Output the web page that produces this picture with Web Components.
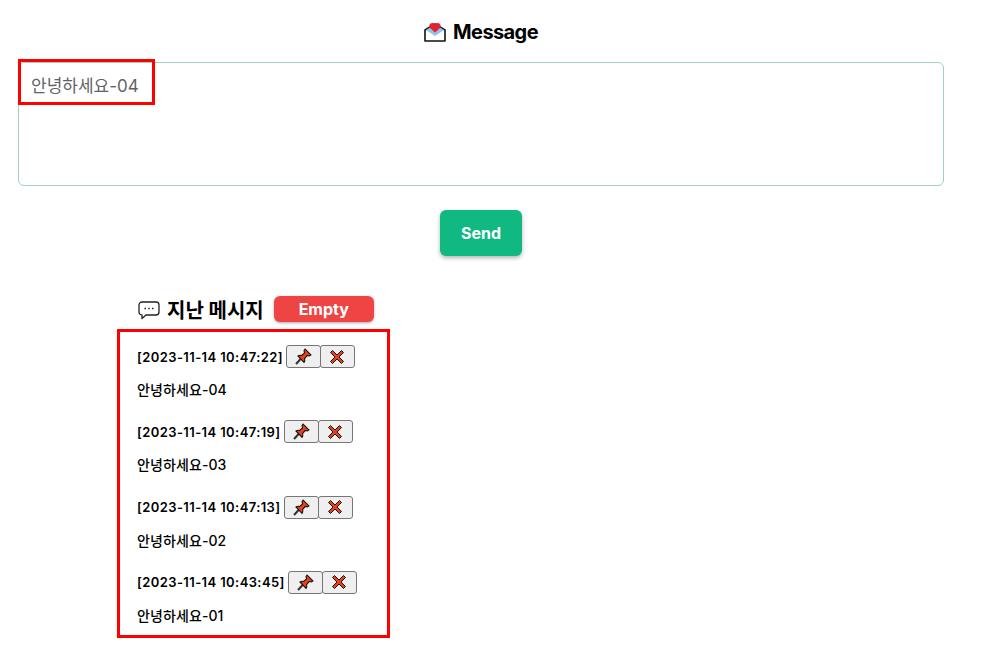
<!DOCTYPE html>
<html lang="ko">
<head>
<meta charset="utf-8">
<title>Message</title>
<style>
  html,body{margin:0;padding:0;background:#fff;}
  body{font-family:Inter,"Noto Sans CJK KR",sans-serif;color:#000;width:962px;}
</style>
</head>
<body>
<message-app>
  <message-form></message-form>
  <message-history>
    <message-item time="2023-11-14 10:47:22">안녕하세요-04</message-item>
    <message-item time="2023-11-14 10:47:19">안녕하세요-03</message-item>
    <message-item time="2023-11-14 10:47:13">안녕하세요-02</message-item>
    <message-item time="2023-11-14 10:43:45">안녕하세요-01</message-item>
  </message-history>
</message-app>
<script>
class MessageApp extends HTMLElement{
    constructor(){
        super();
        this.attachShadow({mode:'open'});
        this.shadowRoot.innerHTML = `
        <style>
            :host{display:block;}
        </style>
        <slot></slot>
        `;
    }
}
class MessageForm extends HTMLElement{
    constructor(){
        super();
        this.attachShadow({mode:'open'});
        this.shadowRoot.innerHTML = `
        <style>
            :host{display:flex;flex-direction:column;align-items:center;padding-top:19px;}
            h1{display:flex;align-items:center;gap:7px;margin:0;height:25px;font-size:20px;font-weight:700;letter-spacing:-.6px;}
            svg{display:block;}
            .box{position:relative;box-sizing:border-box;width:926px;height:124px;margin-top:18px;border:1px solid #9fd0c0;border-radius:6px;
                padding:13px 12px;font-size:17px;line-height:20px;color:#5f6368;}
            .mark{position:absolute;left:-1px;top:-4px;width:131px;height:40px;border:3px solid #f00;}
            button{margin-top:24px;width:82px;height:46px;border:0;border-radius:6px;background:#10b981;color:#fff;
                font:700 16px Inter,sans-serif;box-shadow:0 2px 4px rgba(0,0,0,.3);}
        </style>
        <h1>
            <svg width="22" height="20" viewBox="0 0 22 20">
                <path d="M1 8 11 2 21 8V19H1Z" fill="#fff" stroke="#111" stroke-width="1.6" stroke-linejoin="round"/>
                <path d="M2 8 6 5.500H16L20 8 11 14Z" fill="#8cc4ee"/>
                <path d="M11 10.500 6 6C4.500 4.500 5.500 1 8.300 1 9.600 1 10.500 1.700 11 2.500 11.500 1.700 12.400 1 13.700 1 16.500 1 17.500 4.500 16 6Z" fill="#e8202e"/>
            </svg>
            <span>Message</span>
        </h1>
        <div class="box">안녕하세요-04<div class="mark"></div></div>
        <button>Send</button>
        `;
    }
}
class MessageHistory extends HTMLElement{
    constructor(){
        super();
        this.attachShadow({mode:'open'});
        this.shadowRoot.innerHTML = `
        <style>
            :host{display:block;margin:40px 0 0 117px;width:273px;}
            .head{display:flex;align-items:center;height:26px;padding-left:21px;font-size:20px;font-weight:700;}
            .head svg{margin-right:7px;margin-top:2px;}
            .empty{margin-left:10px;width:100px;height:26px;border:0;border-radius:6px;background:#ef4444;color:#fff;
                font:700 16px Inter,sans-serif;box-shadow:0 1px 3px rgba(0,0,0,.35);padding:0;}
            .list{box-sizing:border-box;margin-top:7px;height:309px;border:3px solid #f00;padding:13px 17px;}
        </style>
        <div class="head">
            <svg width="22" height="20" viewBox="0 0 22 20" fill="none" stroke="#222" stroke-width="1.3">
                <path d="M4 2H18A3 3 0 0 1 21 5V12A3 3 0 0 1 18 15H8L4 18.500V15A3 3 0 0 1 1 12V5A3 3 0 0 1 4 2Z" stroke-linejoin="round"/>
                <path d="M6.500 8.500H8M10.250 8.500H11.750M14 8.500H15.500" stroke-width="1.600"/>
            </svg>
            <span>지난 메시지</span>
            <button class="empty">Empty</button>
        </div>
        <div class="list"><slot></slot></div>
        `;
    }
}
class MessageItem extends HTMLElement{
    constructor(){
        super();
        this.attachShadow({mode:'open'});
        this.shadowRoot.innerHTML = `
        <style>
            :host{display:block;height:75.33px;font-size:13px;font-weight:600;}
            .top{display:flex;align-items:center;height:23px;}
            .time{margin-right:3px;white-space:nowrap;letter-spacing:.4px;}
            button{box-sizing:border-box;width:35px;height:23px;padding:0;display:flex;align-items:center;justify-content:center;
                background:#efefef;border:1px solid #767676;border-radius:3px;}
            button+button{margin-left:-1px;}
            .text{margin-top:12px;line-height:20px;font-size:14px;font-weight:500;letter-spacing:.1px;}
        </style>
        <div class="top">
            <span class="time"></span>
            <button title="pin">
                <svg width="17" height="17" viewBox="0 0 16 16">
                    <path d="M1 15 6 9.500" stroke="#333" stroke-width="2"/>
                    <path d="M9.500 1 15 6.500 13.500 7.500 11.500 7 9 10C9.500 11.500 9.200 12.500 8.500 13.500L2.800 7.500C3.800 6.800 5 6.500 6.300 7L9 4.500 8.500 2.500Z" fill="#e8401a" stroke="#111" stroke-width="1"/>
                </svg>
            </button>
            <button title="delete">
                <svg width="16" height="16" viewBox="0 0 16 16">
                    <path d="M1.500 3.500 3.500 1.500 8 6 12.500 1.500 14.500 3.500 10 8 14.500 12.500 12.500 14.500 8 10 3.500 14.500 1.500 12.500 6 8Z" fill="#e8401a" stroke="#111" stroke-width="1" stroke-linejoin="round"/>
                </svg>
            </button>
        </div>
        <div class="text"><slot></slot></div>
        `;
    }
    connectedCallback(){
        this.shadowRoot.querySelector('.time').textContent = '[' + this.getAttribute('time') + ']';
    }
}
customElements.define('message-app',MessageApp);
customElements.define('message-form',MessageForm);
customElements.define('message-history',MessageHistory);
customElements.define('message-item',MessageItem);
</script>
</body>
</html>
